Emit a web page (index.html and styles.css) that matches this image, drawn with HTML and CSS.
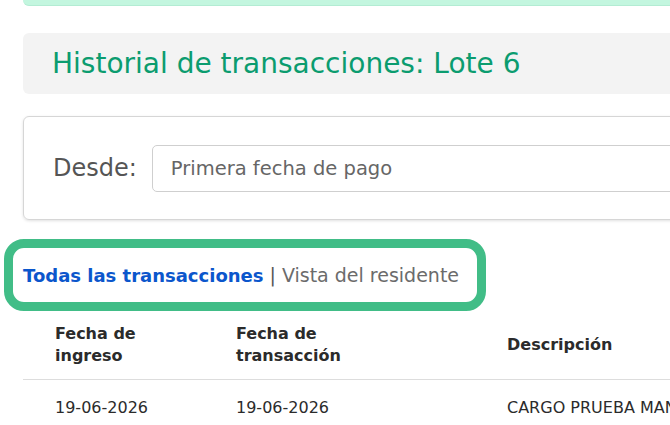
FILE: index.html
```html
<!DOCTYPE html>
<html lang="es">
  <head>
    <meta charset="UTF-8" />
    <meta name="viewport" content="width=device-width, initial-scale=1.0" />
    <title>Historial de transacciones | Lote 6</title>
    <link rel="stylesheet" href="styles.css">
  </head>
  <body>
    <div class="page">
      <div class="alert"></div>

      <header class="title-bar">
        <h1>Historial de transacciones: Lote 6</h1>
      </header>

      <div class="filter-card">
        <label class="filter-label" for="desde">Desde:</label>
        <input id="desde" type="text" class="filter-input" placeholder="Primera fecha de pago" />
      </div>

      <nav class="view-tabs">
        <a href="#" class="tab active">Todas las transacciones</a>
        <span class="sep">|</span>
        <a href="#" class="tab">Vista del residente</a>
      </nav>

      <table class="tx-table">
        <thead>
          <tr>
            <th class="col-ingreso">Fecha de<br>ingreso</th>
            <th class="col-fecha">Fecha de<br>transacción</th>
            <th>Descripción</th>
          </tr>
        </thead>
        <tbody>
          <tr>
            <td>19-06-2026</td>
            <td>19-06-2026</td>
            <td class="nowrap">CARGO PRUEBA MANTENIMIENTO</td>
          </tr>
        </tbody>
      </table>
    </div>
  </body>
</html>
```

FILE: styles.css
```css
* {
    margin: 0;
    padding: 0;
    box-sizing: border-box;
}
body {
    background: #fff;
    font-family: "DejaVu Sans", "Noto Sans", sans-serif;
    overflow: hidden;
}
.page {
    width: 1000px;
    padding-left: 23px;
    display: flex;
    flex-direction: column;
}

.alert {
    height: 6px;
    background: #c3f6df;
    border-bottom: 1px solid #b3ecd3;
    border-radius: 0 0 0 6px;
}

.title-bar {
    margin-top: 27px;
    height: 61px;
    background: #f3f3f3;
    border-radius: 6px;
    padding-left: 29px;
    display: flex;
    align-items: center;
}
.title-bar h1 {
    font-size: 28px;
    font-weight: normal;
    color: #0b9c6f;
}

.filter-card {
    margin-top: 22px;
    height: 104px;
    border: 1px solid #d6d6d6;
    border-radius: 6px;
    box-shadow: 0 1px 3px rgba(0, 0, 0, 0.12);
    padding-left: 29px;
    display: flex;
    align-items: center;
    gap: 15px;
}
.filter-label {
    font-size: 24px;
    color: #555;
}
.filter-input {
    width: 700px;
    height: 47px;
    border: 1px solid #cfcfcf;
    border-radius: 5px;
    padding-left: 18px;
    font-family: inherit;
    font-size: 19.5px;
    outline: 0;
}
.filter-input::placeholder {
    color: #666;
}

.view-tabs {
    margin: 19px 0 0 -19px;
    width: 482px;
    height: 72px;
    border: 9px solid #41bd87;
    border-radius: 20px;
    padding-left: 10px;
    display: flex;
    align-items: center;
    gap: 6px;
    font-size: 19px;
}
.view-tabs .tab {
    text-decoration: none;
    color: #6b6b6b;
}
.view-tabs .tab.active {
    color: #0b56cc;
    font-weight: bold;
    font-size: 18px;
}
.view-tabs .sep {
    color: #555;
}

.tx-table {
    border-collapse: collapse;
    font-size: 16px;
    color: #2b2b2b;
}
.tx-table th {
    text-align: left;
    font-weight: bold;
    line-height: 22px;
    padding: 12px 0 12px 32px;
    vertical-align: middle;
    border-bottom: 1px solid #ddd;
}
.tx-table td {
    line-height: 22px;
    padding: 17px 0 17px 32px;
}
.tx-table .col-ingreso {
    width: 181px;
}
.tx-table .col-fecha {
    width: 271px;
}
.tx-table .nowrap {
    white-space: nowrap;
}
```
